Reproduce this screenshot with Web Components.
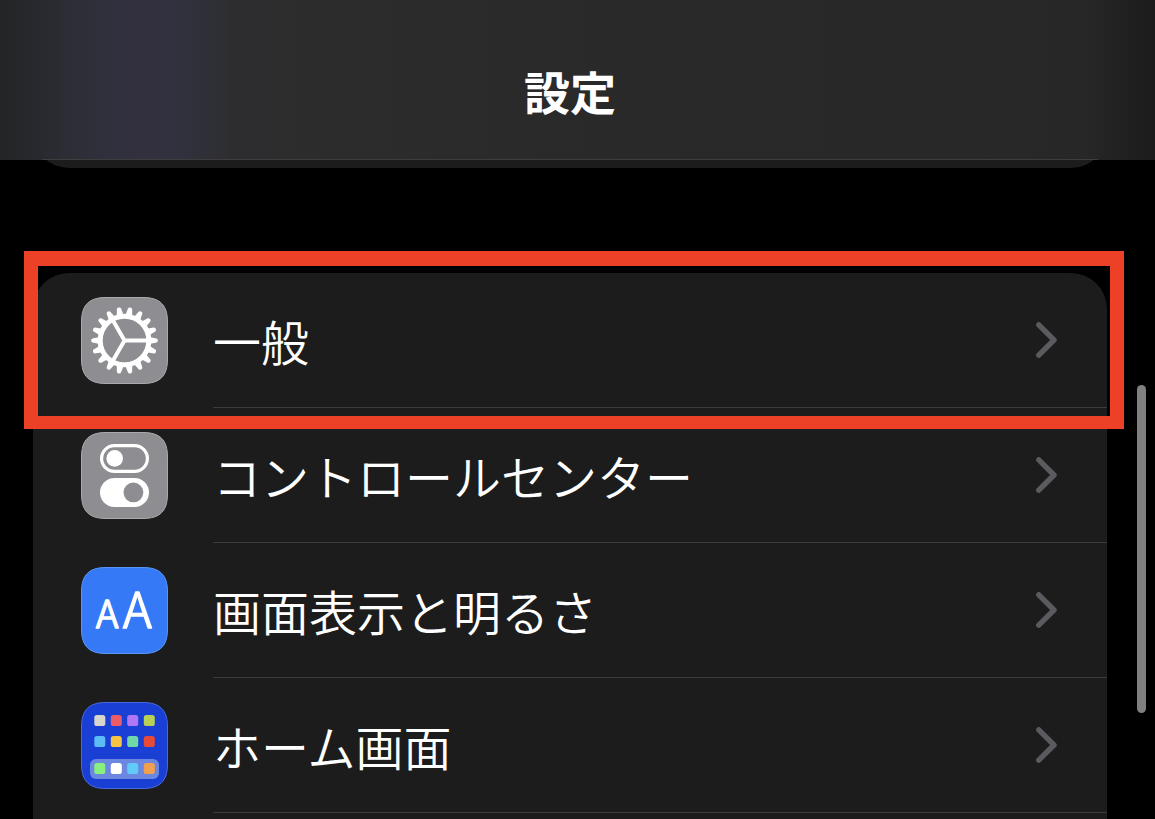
<!DOCTYPE html>
<html lang="ja">
<head>
<meta charset="utf-8">
<meta name="viewport" content="width=device-width, initial-scale=1">
<title>設定</title>
<style>
  body {
    margin: 0;
    background: #000;
    color: #fff;
    font-family: "Noto Sans CJK JP", sans-serif;
  }
</style>
</head>
<body>
<settings-screen>
  <nav-header slot="header">設定</nav-header>
  <settings-group previous></settings-group>
  <settings-group current>
    <settings-row icon="general" highlighted>一般</settings-row>
    <settings-row icon="control">コントロールセンター</settings-row>
    <settings-row icon="display">画面表示と明るさ</settings-row>
    <settings-row icon="home">ホーム画面</settings-row>
  </settings-group>
</settings-screen>

<script>
  // Base class: opens a shadow root and fills it from the static markup.
  class BaseElement extends HTMLElement {
    constructor() {
      super();
      const template = document.createElement('template');
      template.innerHTML = this.constructor.markup;
      this.attachShadow({ mode: 'open' }).append(template.content.cloneNode(true));
    }
  }

  customElements.define('settings-screen', class extends BaseElement {
    static markup = `
      <style>
        :host { display: flex; flex-direction: column; position: relative; height: 100vh; overflow: hidden; }
        main { flex: 1; display: flex; flex-direction: column; padding: 0 48px 0 33px; }
        .thumb { position: absolute; right: 9px; top: 47%; height: 40%; width: 9px; border-radius: 5px; background: #808080; }
      </style>
      <slot name="header"></slot>
      <main><slot></slot></main>
      <div class="thumb"></div>`;
  });

  customElements.define('nav-header', class extends BaseElement {
    static markup = `
      <style>
        :host {
          display: block; position: relative; z-index: 1; flex: none; box-sizing: border-box;
          height: 160px; padding: 57px 48px 0 33px; text-align: center;
          background: linear-gradient(90deg, #222426 0%, #25272b 2%, #2b2c33 5%, #30303c 9%, #32303f 12%, #32313f 15%,
            #2f2f37 18%, #2d2d2f 21%, #2c2c2c 30%, #292929 55%, #282828 88%, #262726 94%, #222322 96%, #1c1c1c 100%);
        }
        h1 { margin: 0; font-size: 46px; line-height: 66px; font-weight: 700; }
        .line { position: absolute; left: 42px; right: 57px; bottom: 0; height: 1px; background: #3e3e3f; }
      </style>
      <h1><slot></slot></h1>
      <div class="line"></div>`;
  });

  customElements.define('settings-group', class extends BaseElement {
    static markup = `
      <style>
        :host { display: flex; flex-direction: column; background: #1c1c1c; }
        :host([previous]) { height: 80px; margin-top: -72px; flex: none; border-radius: 36px; }
        :host([current]) { flex: 1; margin-top: 105px; border-radius: 36px 36px 0 0; }
      </style>
      <slot></slot>`;
  });

  customElements.define('settings-row', class extends BaseElement {
    static markup = `
      <style>
        :host { display: block; position: relative; flex: none; }
        a { display: flex; align-items: center; gap: 45px; height: 135px; padding-left: 48px; color: inherit; text-decoration: none; }
        .body {
          flex: 1; align-self: stretch; box-sizing: border-box; display: flex; align-items: center;
          justify-content: space-between; padding-right: 50px; border-bottom: 1px solid #3c3c3e;
        }
        .label { font-size: 48px; line-height: 68px; font-weight: 350; white-space: nowrap; }
        svg { display: block; flex: none; }
        .frame { display: none; }
        :host([highlighted]) { z-index: 1; }
        :host([highlighted]) .frame {
          display: block; position: absolute; inset: -22px -17px -21px -9px;
          border: 14px solid #ec4027; border-top-width: 15px; border-bottom-width: 13px; pointer-events: none;
        }
      </style>
      <a href="#">
        <app-icon></app-icon>
        <span class="body">
          <span class="label"><slot></slot></span>
          <svg width="21" height="36" viewBox="0 0 21 36" fill="none" stroke="#5b5b5f" stroke-width="5.4" stroke-linecap="round" stroke-linejoin="round" aria-hidden="true"><path d="M2.8 2.8 18 18 2.8 33.2"/></svg>
        </span>
      </a>
      <div class="frame"></div>`;
    connectedCallback() {
      this.shadowRoot.querySelector('app-icon').setAttribute('name', this.getAttribute('icon'));
    }
  });

  // Eighteen tapered teeth around a ring with three spokes.
  function gear() {
    let teeth = '';
    for (let i = 0; i < 18; i++) {
      teeth += `<path transform="rotate(${i * 20})" d="M25-3.5 32-2.1Q33.4-1.7 33.4 0T32 2.1L25 3.5Z"/>`;
    }
    return `<g transform="translate(43.5 43.5)" fill="#fff">${teeth}
      <circle r="24.3" fill="none" stroke="#fff" stroke-width="5"/>
      <path d="M0 0H23M0 0-11.5-19.9M0 0-11.5 19.9" fill="none" stroke="#fff" stroke-width="4"/></g>`;
  }

  function toggles() {
    return `<rect x="20.6" y="13.6" width="45.8" height="25.8" rx="12.9" fill="none" stroke="#fff" stroke-width="3.2"/>
      <circle cx="33.7" cy="26.4" r="8.3" fill="#fff"/>
      <rect x="19" y="46" width="49" height="29" rx="14.5" fill="#fff"/>
      <circle cx="52.4" cy="60.4" r="9.9" fill="#8e8d92"/>`;
  }

  function letters() {
    return `<g fill="#fff" stroke="#fff" stroke-linejoin="round" font-family="Noto Sans CJK JP, sans-serif" font-weight="300">
      <text x="15" y="61" font-size="38" stroke-width="1.6">A</text>
      <text x="42" y="61" font-size="49" stroke-width="1.6">A</text></g>`;
  }

  function homeGrid() {
    const rows = [
      [13, ['#d8d6cc', '#ec5c68', '#b077f5', '#b8d055']],
      [34, ['#5cbcf6', '#f6c444', '#70d8a8', '#e84a38']],
      [61, ['#88f080', '#ffffff', '#62caf8', '#f2a050']]
    ];
    const columns = [13.3, 29.8, 46.2, 62.8];
    return '<rect x="9" y="57" width="69" height="20" rx="6" fill="#6c87e0"/>' + rows.map(([y, colors]) =>
      colors.map((c, i) => `<rect x="${columns[i]}" y="${y}" width="11" height="11" rx="2.6" fill="${c}"/>`).join('')).join('');
  }

  const ICONS = {
    general: { background: '#8e8d92', edge: '#aaaaad', draw: gear },
    control: { background: '#8e8d92', edge: '#aaaaad', draw: toggles },
    display: { background: '#3579f6', edge: '#5c96f5', draw: letters },
    home: { background: '#193fd4', edge: '#4a69dc', draw: homeGrid }
  };

  customElements.define('app-icon', class extends BaseElement {
    static observedAttributes = ['name'];
    static markup = `
      <style>
        :host { display: block; flex: none; width: 87px; height: 87px; }
        svg { display: block; }
      </style>
      <svg width="87" height="87" viewBox="0 0 87 87" aria-hidden="true"></svg>`;
    attributeChangedCallback(_, __, name) {
      const icon = ICONS[name];
      if (!icon) return;
      this.shadowRoot.querySelector('svg').innerHTML =
        `<path d="M25 .5H62C79 .5 86.5 8 86.5 25V62C86.5 79 79 86.5 62 86.5H25C8 86.5 .5 79 .5 62V25C.5 8 8 .5 25 .5Z"
          fill="${icon.background}" stroke="${icon.edge}"/>` + icon.draw();
    }
  });
</script>
</body>
</html>
